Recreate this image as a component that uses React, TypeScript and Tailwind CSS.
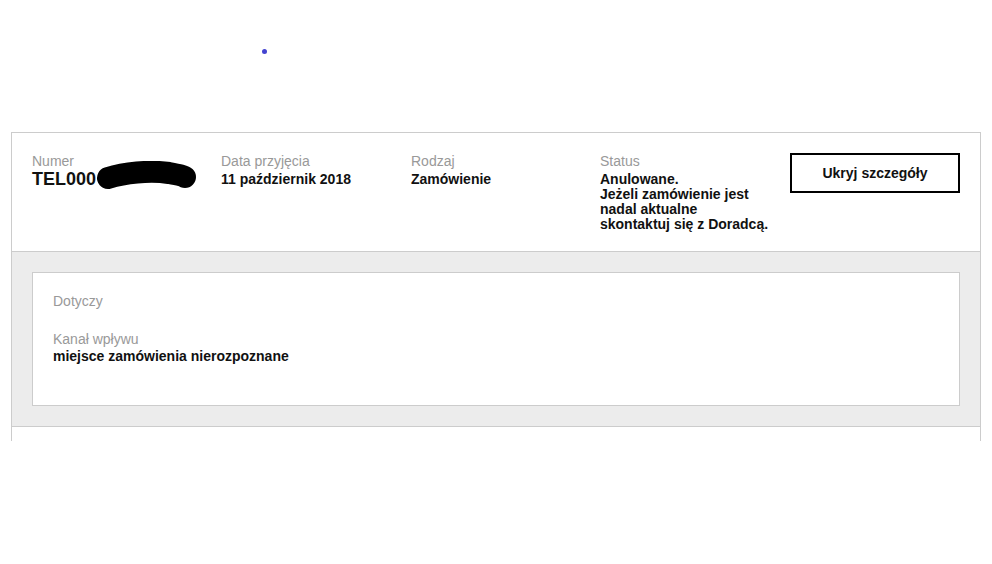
import React from 'react';

const Label: React.FC<{ children: React.ReactNode }> = ({ children }) => (
  <div className="text-[14px] leading-[16px] text-[#999]">{children}</div>
);

const Value: React.FC<{ children: React.ReactNode }> = ({ children }) => (
  <div className="text-[14px] leading-[15px] font-bold text-[#111]">{children}</div>
);

export default function App() {
  return (
    <div className="min-h-[564px] bg-white" style={{ fontFamily: '"Liberation Sans", Arial, sans-serif' }}>
      {/* stray loader dot */}
      <div className="h-[132px] pl-[262px] pt-[49px]">
        <div className="w-[5px] h-[5px] rounded-full bg-[#4343d0]" />
      </div>

      <div className="ml-[11px] w-[970px] border-x border-t border-[#cccccc]">
        {/* header row */}
        <div className="h-[119px] border-b border-[#cccccc] px-5 pt-5 grid grid-cols-[189px_190px_189px_190px_170px]">
          <div>
            <Label>Numer</Label>
            <div className="relative text-[18px] leading-[20px] font-bold text-[#111]">
              TEL000
              <svg className="absolute left-[62px] top-[-8px]" width="110" height="34" viewBox="0 0 110 34">
                <path
                  d="M14 17 C 30 12, 55 9, 75 12 C 86 14, 90 15, 91 16"
                  stroke="#000"
                  strokeWidth="22"
                  strokeLinecap="round"
                  fill="none"
                />
              </svg>
            </div>
          </div>
          <div>
            <Label>Data przyjęcia</Label>
            <div className="mt-[3px]">
              <Value>11 październik 2018</Value>
            </div>
          </div>
          <div>
            <Label>Rodzaj</Label>
            <div className="mt-[3px]">
              <Value>Zamówienie</Value>
            </div>
          </div>
          <div>
            <Label>Status</Label>
            <div className="mt-[3px]">
              <Value>
                Anulowane.
                <br />
                Jeżeli zamówienie jest
                <br />
                nadal aktualne
                <br />
                skontaktuj się z Doradcą.
              </Value>
            </div>
          </div>
          <div>
            <button className="w-[170px] h-[40px] border-2 border-black bg-white text-[14px] font-bold text-[#111]">
              Ukryj szczegóły
            </button>
          </div>
        </div>

        {/* details */}
        <div className="bg-[#ececec] p-5 border-b border-[#cccccc]">
          <div className="h-[134px] border border-[#cccccc] bg-white px-5 pt-5">
            <Label>Dotyczy</Label>
            <div className="h-[22px]" />
            <Label>Kanał wpływu</Label>
            <div className="mt-[2px]">
              <Value>miejsce zamówienia nierozpoznane</Value>
            </div>
          </div>
        </div>

        <div className="h-[14px]" />
      </div>
    </div>
  );
}
